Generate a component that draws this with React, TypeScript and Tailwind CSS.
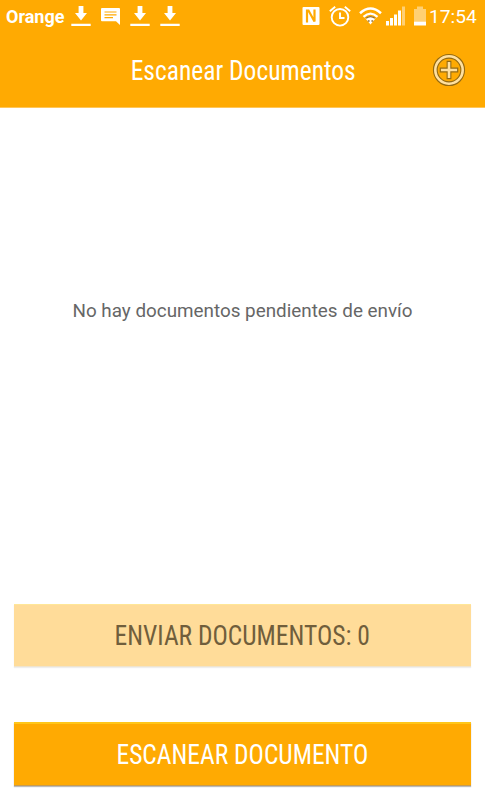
import type { ReactNode } from "react";

function DownloadIcon() {
  return (
    <svg width="20" height="21" viewBox="0 0 20 21" fill="#fff">
      <path d="M7.600 0h4.800v7H16l-6 7.500L4 7h3.600zM.300 17.800h19.400v2.200H.300z" />
    </svg>
  );
}

function MessageIcon() {
  return (
    <svg width="19" height="17" viewBox="0 0 19 17">
      <path d="M1 0h17q1 0 1 1v16l-4-3.700H1q-1 0-1-1V1q0-1 1-1z" fill="#fff" />
      <path d="M3.500 4h12M3.500 6.800h12M3.500 9.600h8.500" stroke="#ffaa02" strokeWidth="1.200" />
    </svg>
  );
}

function NfcIcon() {
  return (
    <svg width="18" height="18" viewBox="0 0 18 18">
      <path d="M1.500 0h15q1 0 1 1v16q0 1-1 1h-15q-1 0-1-1V1q0-1 1-1z" fill="#fff" />
      <path d="M5 15.500V3.500h1.500l6 11V2.500" fill="none" stroke="#ffaa02" strokeWidth="2.200" />
    </svg>
  );
}

function AlarmIcon() {
  return (
    <svg width="22" height="22" viewBox="0 0 22 22" fill="none" stroke="#fff" strokeWidth="1.900">
      <circle cx="11" cy="12.300" r="8.300" />
      <path d="M.800 6.300 6.200 1.800M21.200 6.300 15.800 1.800M11 7.500V13h4.500" />
    </svg>
  );
}

function WifiIcon() {
  return (
    <svg width="23" height="18" viewBox="0 0 23 18" fill="none">
      <path d="M1 6.200Q11.500-3.200 22 6.200" stroke="#fff" strokeWidth="2.500" />
      <path d="M4.500 9.800Q11.500 3.400 18.500 9.800" stroke="#fff" strokeWidth="2.300" />
      <path d="M6.500 11.500Q11.500 7.200 16.500 11.500L11.500 17.500z" fill="#fff" />
      <path d="M7 11.300Q11.500 8 16 11.300" stroke="#98702a" strokeWidth="1.200" />
      <path d="M8.800 14h1.800M12.400 14h1.800" stroke="#98702a" strokeWidth="1.300" />
    </svg>
  );
}

function SignalIcon() {
  return (
    <svg width="19" height="20" viewBox="0 0 19 20" fill="#fff">
      <path d="M0 15h3v4.500H0zM4 12h3v7.500H4zM8 8.500h3v11H8zM12 4.500h3v15h-3z" />
      <path d="M16 .500h3v19h-3z" opacity=".45" />
    </svg>
  );
}

function BatteryIcon() {
  return (
    <svg width="12" height="20" viewBox="0 0 12 20" fill="#fff">
      <path d="M3 .500h6V3h3v12.500H0V3h3z" opacity=".45" />
      <path d="M0 15.500h12v4H0z" />
    </svg>
  );
}

function AddIcon() {
  return (
    <svg width="34" height="34" viewBox="0 0 34 34" fill="none">
      <circle cx="17" cy="17" r="13.700" stroke="#946a12" strokeWidth="4.800" />
      <circle cx="17" cy="17" r="13.700" stroke="#ffe0a0" strokeWidth="2.600" />
      <path d="M17 7.700v18.600M7.700 17h18.600" stroke="#946a12" strokeWidth="4.800" />
      <path d="M17 8.900v16.200M8.900 17h16.200" stroke="#ffe0a0" strokeWidth="2.600" />
    </svg>
  );
}

function CondensedText({ children }: { children: ReactNode }) {
  return (
    <span className="inline-block scale-x-[.944] whitespace-nowrap font-['Roboto_Condensed',Roboto,sans-serif] text-[27px] leading-8 [font-stretch:75%]">
      {children}
    </span>
  );
}

export default function App() {
  return (
    <div className="flex h-[800px] w-[485px] flex-col overflow-hidden bg-white font-[Roboto,sans-serif]">
      <div className="flex h-8 shrink-0 items-center bg-[#ffaa02] pl-1.5 text-white">
        <span className="w-[65px] text-[18px] font-bold">Orange</span>
        <div className="flex flex-1 items-center gap-2.5">
          <DownloadIcon />
          <MessageIcon />
          <DownloadIcon />
          <DownloadIcon />
        </div>
        <div className="flex items-center">
          <NfcIcon />
          <span className="ml-[9px]"><AlarmIcon /></span>
          <span className="ml-2"><WifiIcon /></span>
          <span className="ml-1"><SignalIcon /></span>
          <span className="ml-[9px]"><BatteryIcon /></span>
        </div>
        <span className="ml-[3px] w-[56px] pt-[3px] text-[19.2px]">17:54</span>
      </div>
      <header className="grid h-[76px] shrink-0 grid-cols-[1fr_auto_1fr] items-center border-b border-[#ffc65a] bg-[#ffaa02] text-white">
        <span />
        <span className="pl-px pt-[3px]">
          <CondensedText>Escanear Documentos</CondensedText>
        </span>
        <button className="mr-[19px] mt-px justify-self-end">
          <AddIcon />
        </button>
      </header>
      <main className="flex flex-1 flex-col px-3.5">
        <p className="mt-[191px] text-center text-[18.85px] leading-6 text-[#666]">
          No hay documentos pendientes de envío
        </p>
        <button className="mt-auto h-[63px] border-t border-b border-t-[#ffe798] border-b-[#f0e4cc] bg-[#ffdc99] text-[#705e3c] shadow-[0_1px_1px_#eeeeee]">
          <CondensedText>ENVIAR DOCUMENTOS: 0</CondensedText>
        </button>
        <button className="mb-3.5 mt-[55px] h-16 border-t-2 border-b border-t-[#ffc61a] border-b-[#c79b50] bg-[#ffaa02] text-white shadow-[0_1px_1px_#bbbbbb]">
          <CondensedText>ESCANEAR DOCUMENTO</CondensedText>
        </button>
      </main>
    </div>
  );
}
